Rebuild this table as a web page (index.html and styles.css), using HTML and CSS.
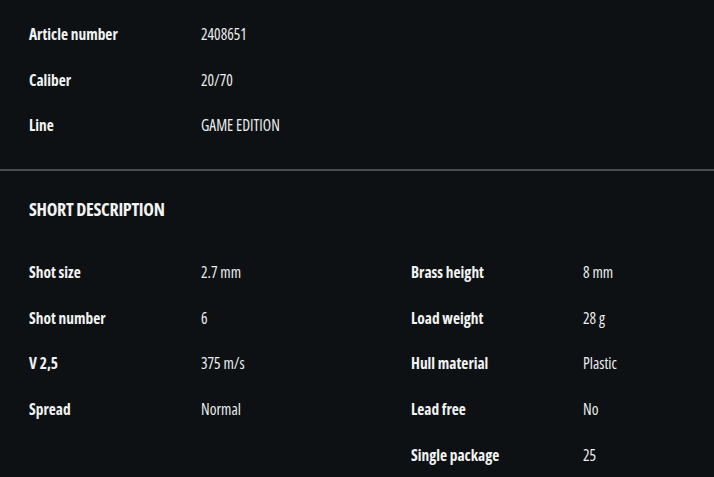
FILE: index.html
```html
<!DOCTYPE html>
<html lang="en">
<head>
<meta charset="utf-8">
<title>Product details</title>
<link rel="stylesheet" href="styles.css">
</head>
<body>
<section class="basics">
  <dl class="specs">
    <div class="row"><dt>Article number</dt><dd>2408651</dd></div>
    <div class="row"><dt>Caliber</dt><dd>20/70</dd></div>
    <div class="row"><dt>Line</dt><dd>GAME EDITION</dd></div>
  </dl>
</section>
<section class="description">
  <h2 class="heading">SHORT DESCRIPTION</h2>
  <div class="columns">
    <dl class="specs wide">
      <div class="row"><dt>Shot size</dt><dd>2.7 mm</dd></div>
      <div class="row"><dt>Shot number</dt><dd>6</dd></div>
      <div class="row"><dt>V 2,5</dt><dd>375 m/s</dd></div>
      <div class="row"><dt>Spread</dt><dd>Normal</dd></div>
    </dl>
    <dl class="specs wide">
      <div class="row"><dt>Brass height</dt><dd>8 mm</dd></div>
      <div class="row"><dt>Load weight</dt><dd>28 g</dd></div>
      <div class="row"><dt>Hull material</dt><dd>Plastic</dd></div>
      <div class="row"><dt>Lead free</dt><dd>No</dd></div>
      <div class="row"><dt>Single package</dt><dd>25</dd></div>
    </dl>
  </div>
</section>
</body>
</html>
```

FILE: styles.css
```css
html, body {
  margin: 0;
  padding: 0;
  background: #0d1114;
}
body {
  color: #f2f3f3;
  font-family: "Open Sans", sans-serif;
  font-stretch: 75%;
  font-size: 15.4px;
  height: 477px;
  overflow: hidden;
}
.basics {
  padding: 12px 29px 20px;
  border-bottom: 2px solid #4b4e51;
}
.specs {
  margin: 0;
}
.row {
  display: grid;
  grid-template-columns: 172px 1fr;
  height: 45.5px;
  align-items: center;
}
.specs dt {
  font-weight: bold;
}
.specs dd {
  margin: 0;
  color: #eceded;
}
.description {
  padding: 26px 29px 0;
}
.heading {
  margin: 0;
  font-size: 18px;
  line-height: 24px;
  font-weight: bold;
  letter-spacing: -0.3px;
}
.columns {
  display: grid;
  grid-template-columns: 382px 1fr;
  padding-top: 29px;
}
.wide .row {
  height: 45.75px;
}
```
